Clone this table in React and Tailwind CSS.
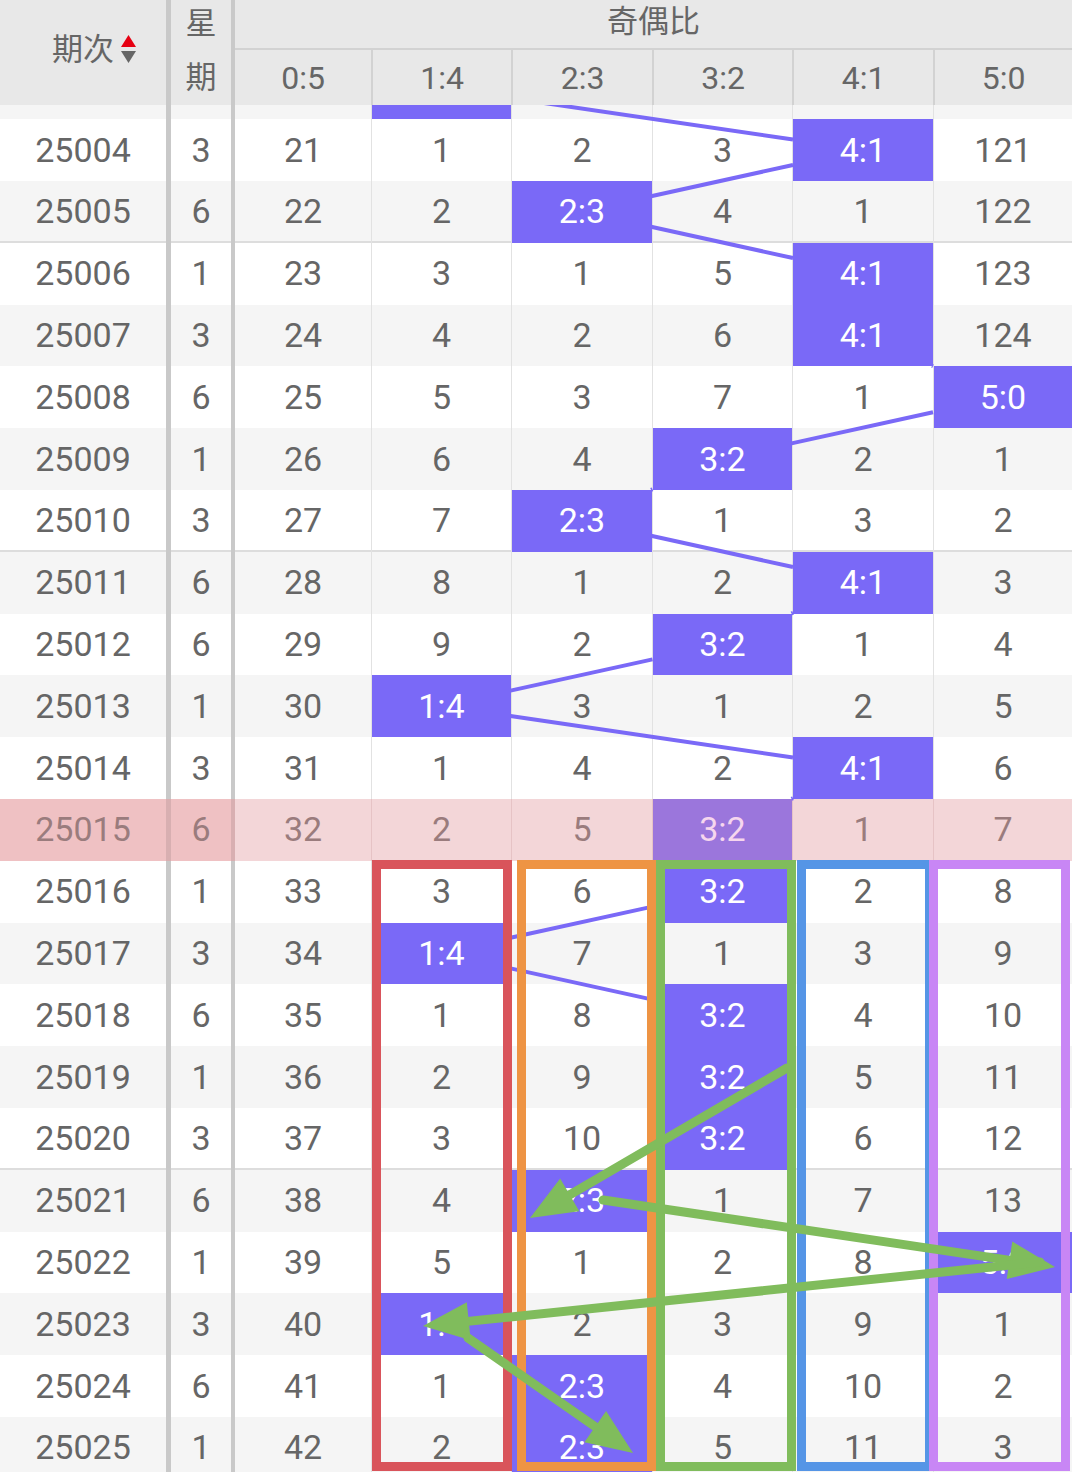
const ROW_H = 61.8
const COL_W = [136, 140, 141, 140, 141, 139]
const COL_C = [303, 441, 581.5, 722, 862.5, 1002.5]
const LABELS = ['0:5', '1:4', '2:3', '3:2', '4:1', '5:0']
const PURPLE = '#7a69f7'
const GREEN = '#80bc5c'

// [期次, 星期, counts for 0:5..5:0, index of the hit column]
const rows = [
  ['25003', null, [null, null, null, null, null, null], 1],
  ['25004', 3, [21, 1, 2, 3, 0, 121], 4],
  ['25005', 6, [22, 2, 0, 4, 1, 122], 2],
  ['25006', 1, [23, 3, 1, 5, 0, 123], 4],
  ['25007', 3, [24, 4, 2, 6, 0, 124], 4],
  ['25008', 6, [25, 5, 3, 7, 1, 0], 5],
  ['25009', 1, [26, 6, 4, 0, 2, 1], 3],
  ['25010', 3, [27, 7, 0, 1, 3, 2], 2],
  ['25011', 6, [28, 8, 1, 2, 0, 3], 4],
  ['25012', 6, [29, 9, 2, 0, 1, 4], 3],
  ['25013', 1, [30, 0, 3, 1, 2, 5], 1],
  ['25014', 3, [31, 1, 4, 2, 0, 6], 4],
  ['25015', 6, [32, 2, 5, 0, 1, 7], 3],
  ['25016', 1, [33, 3, 6, 0, 2, 8], 3],
  ['25017', 3, [34, 0, 7, 1, 3, 9], 1],
  ['25018', 6, [35, 1, 8, 0, 4, 10], 3],
  ['25019', 1, [36, 2, 9, 0, 5, 11], 3],
  ['25020', 3, [37, 3, 10, 0, 6, 12], 3],
  ['25021', 6, [38, 4, 0, 1, 7, 13], 2],
  ['25022', 1, [39, 5, 1, 2, 8, 0], 5],
  ['25023', 3, [40, 0, 2, 3, 9, 1], 1],
  ['25024', 6, [41, 1, 0, 4, 10, 2], 2],
  ['25025', 1, [42, 2, 0, 5, 11, 3], 2],
]

const SEPARATED = ['25005', '25010', '25020']

function SortIcon() {
  return (
    <svg width="17" height="31" viewBox="0 0 17 31" className="ml-[6px]">
      <polygon points="8.5,1 16,13 1,13" fill="#e60012" />
      <polygon points="1,17 16,17 8.5,29" fill="#666666" />
    </svg>
  )
}

function Header() {
  return (
    <div className="flex h-[105px] bg-[#e8e8e8] text-[#666]">
      <div className="w-[171px] border-r-[5px] border-[#c9c9c9] flex items-center pl-[52px] pb-[6px]">
        <span className="text-[31px] leading-none">期次</span>
        <SortIcon />
      </div>
      <div className="w-[64px] border-r-[4px] border-[#c9c9c9] flex flex-col items-center justify-between py-[8px] text-[31px] leading-none">
        <span>星</span>
        <span className="mb-[4px]">期</span>
      </div>
      <div className="flex-1 flex flex-col">
        <div className="h-[50px] border-b-[2px] border-[#d2d2d2] flex items-center justify-center text-[31px] pb-[4px]">奇偶比</div>
        <div className="flex flex-1">
          {LABELS.map((l, j) => (
            <div
              key={l}
              style={{ width: COL_W[j] }}
              className={`flex items-center justify-center text-[32px] ${j > 0 ? 'border-l-[2px] border-[#d2d2d2]' : ''}`}
            >
              {l}
            </div>
          ))}
        </div>
      </div>
    </div>
  )
}

function Row({ r, i }) {
  const [id, wk, vals, hit] = r
  const partial = wk === null
  const pink = id === '25015'
  const bg = pink ? 'bg-[#f3d6d8]' : i % 2 === 0 ? 'bg-[#f5f5f5]' : 'bg-white'
  const sep = SEPARATED.includes(id)
  const text = pink ? 'text-[#9a7c7d]' : 'text-[#666]'
  const fixedBg = pink ? 'bg-[#efc1c3]' : ''
  const thick = pink ? 'border-[#d8afb1]' : 'border-[#c9c9c9]'

  return (
    <div className={`flex h-[61.8px] text-[34px] ${bg} ${text} ${sep ? 'shadow-[inset_0_-2px_0_#dddddd]' : ''}`}>
      <div className={`w-[171px] border-r-[5px] ${thick} ${fixedBg} flex items-center justify-center`}>{partial ? '' : id}</div>
      <div className={`w-[64px] border-r-[4px] ${thick} ${fixedBg} flex items-center justify-center`}>{wk}</div>
      {vals.map((v, j) => {
        const isHit = j === hit
        const cellBg = isHit ? (pink ? 'bg-[#9b76dc] text-[#f6d6ee]' : 'bg-[#7a69f7] text-white') : ''
        return (
          <div
            key={j}
            style={{ width: COL_W[j] }}
            className={`flex items-center justify-center ${j > 0 ? (pink ? 'border-l border-[#e6c3c5]' : 'border-l border-[#e2e2e2]') : ''} ${cellBg}`}
          >
            {partial ? '' : isHit ? LABELS[j] : v}
          </div>
        )
      })}
    </div>
  )
}

// connecting line between hit cells, clipped to the edges of the boxes
function TrendLines() {
  const hw = 69.5
  const hh = 30.9
  const segs = []
  // the hand-drawn arrows take over from 25021 on
  for (let i = 0; i < 18; i++) {
    const xa = COL_C[rows[i][3]]
    const ya = i * ROW_H + ROW_H / 2
    const xb = COL_C[rows[i + 1][3]]
    const yb = (i + 1) * ROW_H + ROW_H / 2
    const dx = xb - xa
    const dy = yb - ya
    if (dx === 0) continue
    const t = Math.min(hw / Math.abs(dx), hh / Math.abs(dy))
    segs.push([xa + dx * t, ya + dy * t, xb - dx * t, yb - dy * t])
  }
  return (
    <svg className="absolute top-0 left-0 pointer-events-none" width="1072" height={rows.length * ROW_H}>
      {segs.map((s, k) => (
        <line key={k} x1={s[0]} y1={s[1]} x2={s[2]} y2={s[3]} stroke={PURPLE} strokeWidth="4" />
      ))}
    </svg>
  )
}

function Arrow({ x1, y1, x2, y2 }) {
  const dx = x2 - x1
  const dy = y2 - y1
  const len = Math.hypot(dx, dy)
  const ux = dx / len
  const uy = dy / len
  const hl = 46
  const hwid = 19
  const bx = x2 - ux * hl
  const by = y2 - uy * hl
  const px = -uy
  const py = ux
  return (
    <g>
      <line x1={x1} y1={y1} x2={bx + ux * 6} y2={by + uy * 6} stroke={GREEN} strokeWidth="9" strokeLinecap="round" />
      <polygon
        points={`${x2},${y2} ${bx + px * hwid},${by + py * hwid} ${bx - px * hwid},${by - py * hwid}`}
        fill={GREEN}
      />
    </g>
  )
}

function Annotations() {
  const sw = 9
  const top = 860
  const bottom = 1471
  const frames = [
    [372, 512, '#d9545b'],
    [517, 656, '#ee9444'],
    [656, 796, '#80bc5c'],
    [797, 934, '#5595e6'],
    [929, 1070, '#c886f5'],
  ]
  return (
    <svg className="absolute top-0 left-0 pointer-events-none" width="1072" height="1472">
      {frames.map(([l, r, c]) => (
        <rect
          key={c}
          x={l + sw / 2}
          y={top + sw / 2}
          width={r - l - sw}
          height={bottom - top - sw}
          fill="none"
          stroke={c}
          strokeWidth={sw}
        />
      ))}
      <Arrow x1={787} y1={1068} x2={530} y2={1218} />
      <Arrow x1={603} y1={1200} x2={1055} y2={1267} />
      <Arrow x1={1040} y1={1262} x2={423} y2={1326} />
      <Arrow x1={468} y1={1338} x2={633} y2={1453} />
    </svg>
  )
}

export default function App() {
  return (
    <div className="relative w-[1072px] h-[1472px] overflow-hidden bg-white font-[Roboto,'Noto_Sans_CJK_SC',sans-serif]">
      <Header />
      <div className="relative h-[1367px] overflow-hidden">
        <div className="relative mt-[-47.6px]">
          {rows.map((r, i) => (
            <Row key={r[0]} r={r} i={i} />
          ))}
          <TrendLines />
        </div>
      </div>
      <Annotations />
    </div>
  )
}
